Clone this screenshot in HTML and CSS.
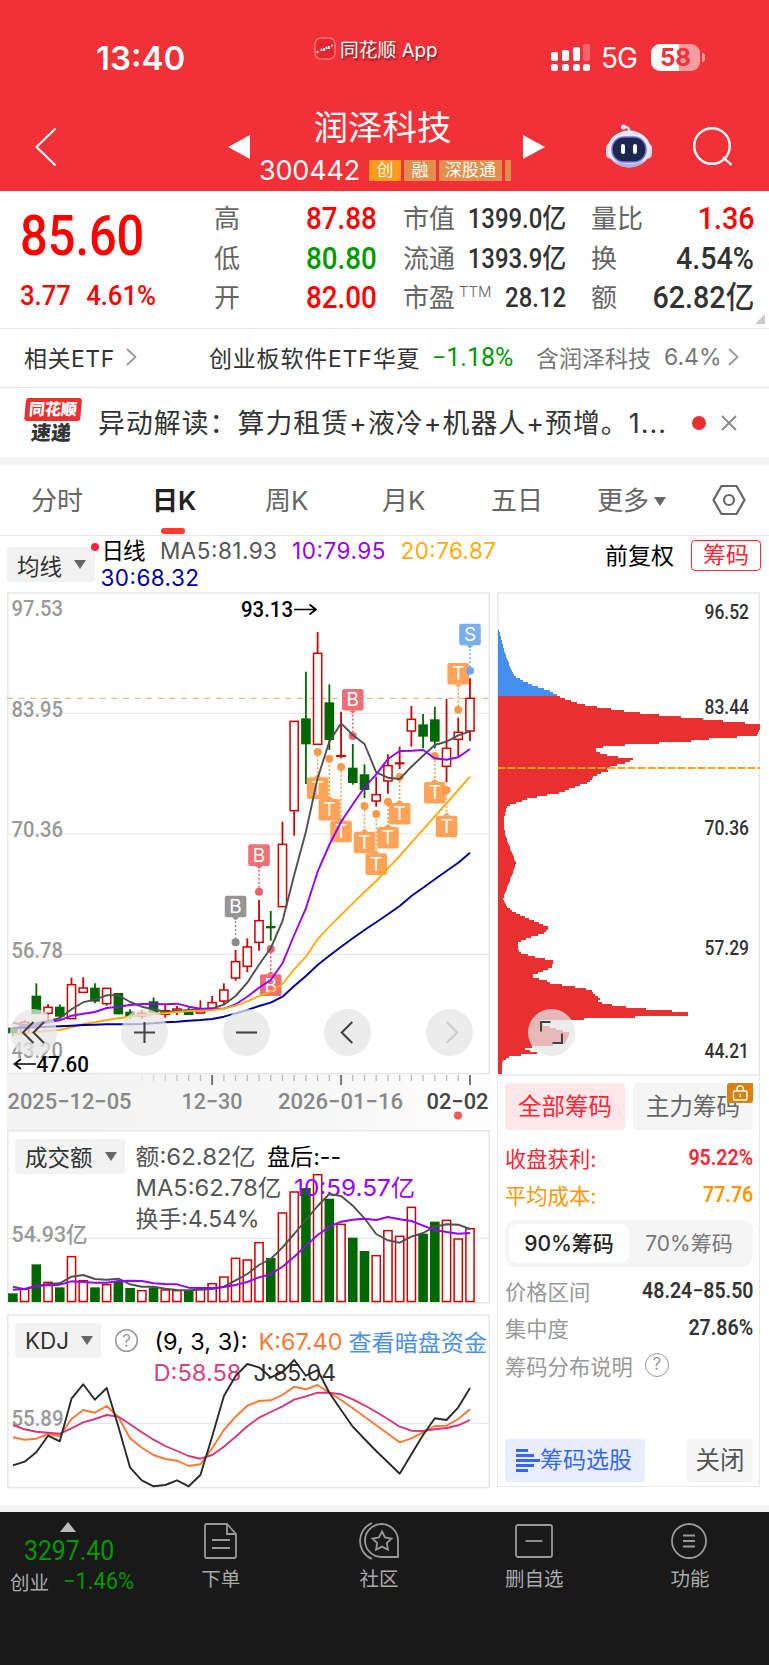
FILE: index.html
```html
<!DOCTYPE html>
<html lang="zh-CN">
<head>
  <meta charset="UTF-8" />
  <meta name="viewport" content="width=device-width, initial-scale=1.0"/>
  <title>润泽科技 300442</title>
  <link rel="stylesheet" href="styles.css">
</head>
<body>

  <header class="header">
    <div class="status">
      <span class="clock">13:40</span>
      <span class="app-name">
        <svg width="22" height="23" viewBox="0 0 22 23"><rect x="1" y="1" width="20" height="21" rx="6" fill="#e8252c" stroke="#f77" stroke-width="1.5"/><path d="M2.500 14.500l2 1M7 14l1-2M10 11v3M12 10l1 2M15 9v3M18 7.500v2" stroke="#fff" stroke-width="2"/></svg>
        <span>同花顺 App</span>
      </span>
      <svg class="signal" width="40" height="28" viewBox="0 0 40 28" fill="#fff">
        <rect x="0" y="8" width="7" height="9" rx="2"/><rect x="11" y="6" width="7" height="11" rx="2"/><rect x="22" y="3" width="7" height="14" rx="2"/><rect x="32" y="0" width="7" height="17" rx="2" opacity=".25"/>
        <rect x="0" y="20" width="7" height="7" rx="2.5"/><rect x="11" y="20" width="7" height="7" rx="2.5"/><rect x="22" y="20" width="7" height="7" rx="2.5"/><rect x="32" y="20" width="7" height="7" rx="2.5"/>
      </svg>
      <span class="net">5G</span>
      <span class="battery">58</span><i class="battery-tip"></i>
    </div>
    <div class="nav">
      <svg class="back" width="22" height="40" viewBox="0 0 22 40"><path d="M20.500 1.500L1.500 20L20.500 38.500" fill="none" stroke="#fff" stroke-width="2.2"/></svg>
      <svg class="prev" width="22" height="24" viewBox="0 0 22 24"><path d="M22 0V24L0 12z" fill="#fff"/></svg>
      <div class="stock">
        <div class="stock-name">润泽科技</div>
        <div class="stock-code">
          <span class="code">300442</span>
          <em class="badge hot">创</em><em class="badge">融</em><em class="badge wide">深股通</em><em class="badge cut"></em>
        </div>
      </div>
      <svg class="next" width="22" height="24" viewBox="0 0 22 24"><path d="M0 0V24L22 12z" fill="#fff"/></svg>
      <svg class="robot" width="48" height="46" viewBox="0 0 48 46">
        <path d="M24 9Q25 4 20 4" fill="none" stroke="#ccd3f5" stroke-width="2.5"/><circle cx="18.500" cy="4" r="2.500" fill="#e9ecff"/>
        <rect x="1" y="20" width="10" height="16" rx="5" fill="#cfd4f2"/><rect x="37" y="20" width="10" height="16" rx="5" fill="#cfd4f2"/>
        <ellipse cx="24" cy="26" rx="21.500" ry="18.500" fill="#e6eafc"/><path d="M8 37Q24 45 40 37Q34 44.500 24 44.500T8 37" fill="#a9b3e8"/>
        <rect x="7" y="14" width="34" height="25" rx="12" fill="#1c2750" stroke="#7b6fe0" stroke-width="1.5"/>
        <rect x="16" y="21" width="4" height="10" rx="2" fill="#fff"/><rect x="28" y="21" width="4" height="10" rx="2" fill="#fff"/>
      </svg>
      <svg class="search" width="42" height="42" viewBox="0 0 42 42" fill="none" stroke="#fff" stroke-width="2.4"><circle cx="20" cy="20" r="17.800"/><path d="M31 31L39.500 39"/></svg>
    </div>
  </header>

  <section class="quote">
    <div class="price">
      <div class="last din">85.60</div>
      <div class="change"><span class="din">3.77</span><span class="din">4.61%</span></div>
    </div>
    <dl class="stats c1">
      <dt>高</dt><dd class="up din">87.88</dd>
      <dt>低</dt><dd class="down din">80.80</dd>
      <dt>开</dt><dd class="up din">82.00</dd>
    </dl>
    <dl class="stats c2">
      <dt>市值</dt><dd class="din">1399.0亿</dd>
      <dt>流通</dt><dd class="din">1393.9亿</dd>
      <dt>市盈<sup>TTM</sup></dt><dd class="din">28.12</dd>
    </dl>
    <dl class="stats c3">
      <dt>量比</dt><dd class="up din">1.36</dd>
      <dt>换</dt><dd class="din">4.54%</dd>
      <dt>额</dt><dd class="din">62.82亿</dd>
    </dl>
    <i class="corner"></i>
  </section>

  <section class="etf">
    <span class="etf-title">相关ETF</span>
    <svg width="11" height="18" viewBox="0 0 11 18"><path d="M1 1l8.500 8L1 17" fill="none" stroke="#999" stroke-width="1.8"/></svg>
    <span class="etf-name">创业板软件ETF华夏</span>
    <span class="etf-pct din">−1.18%</span>
    <span class="etf-hold">含润泽科技</span><span class="etf-weight">6.4%</span>
    <svg width="11" height="18" viewBox="0 0 11 18"><path d="M1 1l8.500 8L1 17" fill="none" stroke="#999" stroke-width="1.8"/></svg>
  </section>

  <section class="news">
    <div class="news-logo"><b>同花顺</b><i>速递</i></div>
    <span class="news-text">异动解读：算力租赁+液冷+机器人+预增。1...</span>
    <i class="news-dot"></i>
    <svg width="16" height="16" viewBox="0 0 16 16"><path d="M1 1l14 14M15 1L1 15" stroke="#888" stroke-width="1.800"/></svg>
  </section>

  <nav class="tabs">
    <span>分时</span>
    <span class="active">日K</span>
    <span>周K</span>
    <span>月K</span>
    <span>五日</span>
    <span>更多<i class="caret"></i></span>
    <svg width="34" height="32" viewBox="0 0 34 32" fill="none" stroke="#666" stroke-width="2.200"><path d="M9.500 2h15L32.500 16l-8 14h-15L1.500 16z" stroke-linejoin="round"/><circle cx="17" cy="16" r="5"/></svg>
  </nav>

  <div class="info">
    <span class="select ma-select">均线<i class="caret"></i></span>
    <i class="ma-dot"></i>
    <svg class="ma-values" width="410" height="56" viewBox="100 536 410 56">
      <g font-size="22.500">
        <text x="102.500" y="559" textLength="44" fill="#000">日线</text>
        <text x="161" y="559" textLength="117" fill="#555">MA5:81.93</text>
        <text x="293" y="559" textLength="93.500" fill="#9400ff">10:79.95</text>
        <text x="401.500" y="559" textLength="95.500" fill="#ffac0a">20:76.87</text>
        <text x="101.500" y="586" textLength="98.500" fill="#00009c">30:68.32</text>
      </g>
    </svg>
    <span class="fq">前复权</span>
    <span class="chip-btn">筹码</span>
  </div>

  <main class="charts">
    <div class="left">
      <svg id="kline" width="483" height="538" viewBox="7 592 483 538"></svg>
      <div class="panel">
        <svg id="volume" width="483" height="174" viewBox="7 1130 483 174"></svg>
        <span class="select">成交额<i class="caret"></i></span>
      </div>
      <div class="panel">
        <svg id="kdj" width="483" height="175" viewBox="7 1314 483 175"></svg>
        <span class="select">KDJ<i class="caret"></i></span>
      </div>
    </div>

    <div class="right">
      <svg id="chips" width="263" height="484" viewBox="497 592 263 484"></svg>
      <div class="chip-info">
        <div class="chip-tabs">
          <span class="on">全部筹码</span>
          <span>主力筹码
            <svg class="lock" width="26" height="20" viewBox="0 0 26 20"><path d="M3 0H26V17a3 3 0 0 1-3 3H0V3a3 3 0 0 1 3-3z" fill="#d9820f"/><rect x="6.500" y="8" width="13.500" height="9" rx="1" fill="none" stroke="#fff" stroke-width="1.300"/><path d="M10 8V6a3.200 3.200 0 0 1 6.400 0V8M13.200 11v3" fill="none" stroke="#fff" stroke-width="1.300"/></svg>
          </span>
        </div>
        <div class="row red"><span>收盘获利:</span><b>95.22%</b></div>
        <div class="row orange"><span>平均成本:</span><b>77.76</b></div>
        <div class="switch"><span class="on">90%筹码</span><span>70%筹码</span></div>
        <div class="row"><span>价格区间</span><b>48.24−85.50</b></div>
        <div class="row"><span>集中度</span><b>27.86%</b></div>
        <div class="row"><span>筹码分布说明</span><i class="help">?</i></div>
        <div class="chip-actions">
          <span class="pick"><svg width="24" height="24" viewBox="0 0 24 24" fill="#3366ff"><path d="M0 0h12v3H0zM0 5h18v3H0zM0 10h24v3H0zM0 15h18v3H0zM0 20h12v3H0z"/></svg>筹码选股</span>
          <span class="close">关闭</span>
        </div>
      </div>
    </div>

    <div class="tools">
      <span><svg viewBox="0 0 24 24"><path d="M12 1L1 12l11 11M23 1L12 12l11 11"/></svg></span>
      <span><svg viewBox="0 0 24 24"><path d="M12 1v22M1 12h22"/></svg></span>
      <span><svg viewBox="0 0 24 24"><path d="M1 12h22"/></svg></span>
      <span><svg viewBox="0 0 24 24"><path d="M17 1L6 12l11 11"/></svg></span>
      <span class="off"><svg viewBox="0 0 24 24"><path d="M9 1l11 11L9 23"/></svg></span>
      <span><svg viewBox="0 0 24 24"><path d="M1 11V1h10M23 13v10H13"/></svg></span>
    </div>
  </main>

  <footer class="tabbar">
    <div class="index">
      <i class="tri"></i>
      <span class="index-value din">3297.40</span>
      <span class="index-sub"><span>创业</span><b class="din">−1.46%</b></span>
    </div>
    <div class="item">
      <svg width="36" height="38" viewBox="0 0 36 38"><path d="M3 2h21l9 10v22a2 2 0 0 1-2 2H3a2 2 0 0 1-1-2V3zM24 2v10h9M9 18h18M9 26h18"/></svg>
      <span>下单</span>
    </div>
    <div class="item i2">
      <svg width="40" height="38" viewBox="0 0 40 38"><path d="M13 1C-3 8-3 30 13 37M39 35H23A16.500 16.500 0 1 1 39 19zM23 9.500l3 6 6.500 1-4.700 4.600 1.100 6.600-5.900-3.100-5.900 3.100 1.100-6.600-4.700-4.600 6.500-1z"/></svg>
      <span>社区</span>
    </div>
    <div class="item i3">
      <svg width="38" height="38" viewBox="0 0 38 38"><rect x="1" y="3" width="36" height="32" rx="2"/><path d="M10.500 19h17"/></svg>
      <span>删自选</span>
    </div>
    <div class="item i4">
      <svg width="38" height="38" viewBox="0 0 38 38"><circle cx="18" cy="19" r="17"/><path d="M12 13.500h12M12 19h12M12 24.500h12"/></svg>
      <span>功能</span>
    </div>
  </footer>

  <script src="app.js"></script>
</body>
</html>
```
FILE: styles.css
```css
* {
  box-sizing: border-box;
}
body {
  margin: 0;
  width: 769px;
  background: #fff;
  color: #333;
  font-family: Inter, "Noto Sans CJK SC", sans-serif;
  overflow-x: hidden;
}
svg {
  display: block;
  flex: none;
}
i, em {
  font-style: normal;
}
text {
  font-family: Inter, "Noto Sans CJK SC", sans-serif;
}
.din, text.din {
  font-family: Roboto, "Noto Sans CJK SC", sans-serif;
  font-weight: 500;
}
.up { color: #f00; }
.down { color: #090; }

/* header */
.header {
  height: 191px;
  background: #f23038;
  color: #fff;
}
.status {
  display: flex;
  align-items: center;
  height: 100px;
  padding: 15px 0 0 96px;
}
.clock {
  width: 218px;
  font-size: 33px;
  font-weight: 600;
}
.app-name {
  display: flex;
  align-items: center;
  width: 237px;
  margin-top: -18px;
  gap: 4px;
  font-size: 18.800px;
  white-space: nowrap;
  text-shadow: 1px 2px 2px rgba(0,0,0,.5);
}
.net {
  margin-left: 10px;
  width: 50px;
  font-size: 28px;
  letter-spacing: -1px;
}
.battery {
  width: 49px;
  height: 27px;
  border-radius: 9px;
  background: linear-gradient(90deg, #fff 58%, #f99ca0 58%);
  color: #f23038;
  font-size: 24px;
  font-weight: 700;
  line-height: 27px;
  text-align: center;
}
.battery-tip {
  width: 3px;
  height: 9px;
  margin-left: 2px;
  border-radius: 0 3px 3px 0;
  background: #f99ca0;
}
.nav {
  display: flex;
  align-items: center;
  height: 91px;
  padding-left: 35px;
}
.back { margin-top: 3px; }
.prev { margin-left: 171px; margin-top: 2px; }
.stock {
  width: 274px;
  padding-left: 9px;
}
.stock-name {
  height: 50px;
  margin-right: 18px;
  font-size: 34.500px;
  line-height: 48px;
  text-align: center;
}
.stock-code {
  display: flex;
  align-items: center;
  height: 34px;
}
.code {
  width: 110px;
  font-size: 27px;
  letter-spacing: -.2px;
}
.badge {
  width: 32px;
  height: 21px;
  margin-right: 3px;
  background: #e38e4a;
  font-size: 17px;
  line-height: 21px;
  text-align: center;
}
.badge.hot { background: #ff9c1b; }
.badge.wide { width: 63px; }
.badge.cut { width: 6px; }
.next { margin-top: 2px; margin-left: -1px; }
.robot { margin-left: 60px; }
.search { margin-left: 39px; margin-top: 2px; }

/* quote */
.quote {
  position: relative;
  display: flex;
  height: 138px;
  border-bottom: 1px solid #e6e6e6;
}
.price {
  width: 214px;
  padding: 9px 0 0 20px;
  color: #f00;
}
.last {
  font-size: 56px;
  line-height: 73px;
  transform: scaleX(.87);
  transform-origin: left;
}
.change {
  display: flex;
  gap: 10px;
  font-size: 28.500px;
  line-height: 46px;
  transform: scaleX(.9);
  transform-origin: left;
}
.change span + span { margin-left: 7px; }
.stats {
  display: grid;
  grid-template-columns: auto minmax(0, 1fr);
  grid-auto-rows: 39.500px;
  align-content: start;
  margin: 8px 0 0;
  line-height: 40px;
}
.stats dt {
  color: #666;
  font-size: 26px;
  white-space: nowrap;
}
.stats dd {
  justify-self: end;
  margin: 0;
  font-size: 30.500px;
  text-align: right;
  white-space: nowrap;
  transform: scaleX(.91);
  transform-origin: right;
}
.stats sup {
  margin-left: 4px;
  font-size: 15px;
  font-weight: 300;
  line-height: 0;
}
.c1 { width: 163px; }
.c2 { width: 163px; margin-left: 26px; }
.c2 dd { font-size: 27.500px; transform: scaleX(.87); }
.c3 { width: 163px; margin-left: 25px; }
.c3 dd { transform: scaleX(.94); }
.corner {
  position: absolute;
  right: 4px;
  bottom: 4px;
  border: solid transparent;
  border-width: 10px 0 0 10px;
  border-bottom: 10px solid #ccc;
  border-top: 0;
}

.etf {
  display: flex;
  align-items: center;
  height: 59px;
  padding: 0 0 2px 24px;
  border-bottom: 1px solid #e6e6e6;
  font-size: 23px;
  white-space: nowrap;
}
.etf-title { width: 102px; letter-spacing: .5px; }
.etf-name { width: 223px; margin-left: 72px; letter-spacing: .8px; }
.etf-pct { width: 104px; color: #090; font-size: 25px; font-weight: 400; }
.etf-hold { width: 128px; color: #777; }
.etf-weight { width: 64px; color: #777; }

.news {
  display: flex;
  align-items: center;
  height: 69px;
  padding-left: 24px;
}
.news-logo {
  width: 56px;
  margin: -2px 18px 0 0;
  text-align: center;
  transform: skewX(-5deg);
}
.news-logo b {
  display: block;
  border-radius: 3px;
  background: #e83030;
  color: #fff;
  font-size: 16px;
  font-weight: 900;
  line-height: 23px;
}
.news-logo i {
  display: block;
  font-size: 20px;
  font-weight: 900;
  line-height: 25px;
}
.news-text {
  width: 594px;
  margin-top: -3px;
  font-size: 26.800px;
  letter-spacing: 1.1px;
  white-space: nowrap;
}
.news-dot {
  width: 14px;
  height: 14px;
  margin-right: 15px;
  border-radius: 50%;
  background: #e83030;
}

/* period tabs */
.tabs {
  display: flex;
  align-items: center;
  height: 79px;
  padding-left: 31px;
  border-top: 8px solid #f4f4f4;
  border-bottom: 1px solid #e6e6e6;
  color: #666;
  font-size: 26px;
}
.tabs span {
  position: relative;
  top: -2px;
  width: 113px;
  white-space: nowrap;
}
.tabs span:first-child { width: 121px; }
.tabs span:nth-child(3) { width: 117px; }
.tabs span:nth-child(4) { width: 109px; }
.tabs span:nth-child(5) { width: 106px; }
.tabs span:nth-child(6) { width: 115px; }
.tabs .active {
  color: #222;
  font-weight: 600;
}
.tabs .active::after {
  content: "";
  position: absolute;
  left: 9px;
  bottom: -17px;
  width: 24px;
  height: 6px;
  border-radius: 3px;
  background: #ff3b30;
}
.caret {
  display: inline-block;
  margin-left: 5px;
  border: 6.500px solid transparent;
  border-top: 9px solid #666;
  border-bottom: 0;
  vertical-align: 4px;
}

/* averages row */
.info {
  display: flex;
  height: 56px;
  padding-left: 7px;
}
.select {
  display: flex;
  align-items: center;
  height: 35px;
  padding: 0 8px 0 10px;
  border-radius: 4px;
  background: #f2f2f2;
  font-size: 22.500px;
  white-space: nowrap;
}
.select .caret { margin-left: 12px; }
.ma-select {
  width: 88px;
  margin-top: 11px;
}
.ma-dot {
  width: 8px;
  height: 8px;
  margin: 7px 0 0 -4px;
  border-radius: 50%;
  background: #ff2436;
}
.fq {
  margin-left: 96px;
  width: 86px;
  color: #000;
  font-size: 23px;
  line-height: 41px;
}
.chip-btn {
  width: 70px;
  height: 31px;
  margin-top: 4px;
  border: 1.500px solid #ff2436;
  border-radius: 4px;
  color: #ff2436;
  font-size: 23px;
  line-height: 28px;
  text-align: center;
}

/* charts */
.charts {
  position: relative;
  display: flex;
  gap: 7px;
  height: 913px;
  padding-left: 7px;
}
.left {
  width: 483px;
}
.panel {
  position: relative;
  margin-bottom: 10px;
}
.panel .select {
  position: absolute;
  left: 8px;
  top: 8.500px;
}
.right {
  width: 263px;
}
.chip-info {
  height: 411px;
  padding: 7px 6px 0 7px;
  border: solid #e8e8e8;
  border-width: 0 1.500px 1.500px;
}
.chip-tabs {
  display: flex;
  gap: 8px;
  margin-bottom: 9px;
}
.chip-tabs span {
  position: relative;
  width: 120px;
  height: 47px;
  border-radius: 4px;
  background: #f5f5f5;
  color: #666;
  font-size: 23.500px;
  line-height: 47px;
  text-align: center;
}
.chip-tabs .on {
  background: #ffe6e8;
  color: #ff2436;
}
.lock {
  position: absolute;
  right: 0;
  top: 0;
}
.row {
  display: flex;
  align-items: center;
  height: 37.500px;
  color: #999;
  font-size: 21.300px;
}
.row b {
  margin-left: auto;
  color: #333;
  font-family: Roboto, sans-serif;
  font-size: 21.500px;
  font-weight: 600;
  transform: scaleX(.91);
  transform-origin: right;
}
.row.red, .row.red b { color: #ff2436; }
.row.orange, .row.orange b { color: #ff9500; }
.row.orange { height: 36px; }
.help {
  width: 24px;
  height: 24px;
  margin-left: 12px;
  border: 1.500px solid #999;
  border-radius: 50%;
  font-size: 17px;
  line-height: 21px;
  text-align: center;
}
.switch {
  display: flex;
  height: 47px;
  margin: 7px 0 5px;
  padding: 4px;
  border-radius: 11px;
  background: #f5f5f5;
  color: #777;
  font-size: 21px;
  line-height: 39px;
  text-align: center;
}
.switch span { flex: 1; white-space: nowrap; }
.switch .on {
  border-radius: 8px;
  background: #fff;
  color: #222;
  font-weight: 500;
}
.chip-actions {
  display: flex;
  justify-content: space-between;
  margin-top: 55px;
  line-height: 43px;
}
.pick {
  display: flex;
  align-items: center;
  width: 140px;
  height: 43px;
  padding-left: 11px;
  border-radius: 4px;
  background: #e8eeff;
  color: #3366ff;
  font-size: 23px;
}
.close {
  width: 66px;
  height: 43px;
  border-radius: 4px;
  background: #f5f5f5;
  color: #555;
  font-size: 24.500px;
  text-align: center;
}
.tools {
  position: absolute;
  left: 10px;
  top: 417px;
  display: flex;
  gap: 54.600px;
}
.tools span {
  width: 47px;
  height: 47px;
  padding: 12px;
  border-radius: 50%;
  background: rgba(230,230,230,.75);
}
.tools span:first-child { margin-right: 9.600px; }
.tools path {
  fill: none;
  stroke: #444;
  stroke-width: 2.200;
}
.tools .off path { stroke: #ccc; }

/* bottom bar */
.tabbar {
  display: flex;
  height: 160px;
  border-top: 7px solid #f4f4f4;
  background: #191919;
  color: #aaa;
  font-size: 19.500px;
}
.index {
  width: 141px;
  padding-top: 10px;
}
.tri {
  display: block;
  width: 0;
  margin-left: 60px;
  border: 8.500px solid transparent;
  border-top: 0;
  border-bottom: 10px solid #bbb;
}
.index-value {
  display: block;
  margin-left: 24px;
  color: #090;
  font-size: 28.500px;
  font-weight: 400;
  line-height: 38px;
  transform: scaleX(.87);
  transform-origin: left;
}
.index-sub {
  display: flex;
  align-items: center;
  height: 22px;
  padding-left: 10px;
}
.index-sub .din {
  margin-left: 14px;
  color: #090;
  font-size: 23.500px;
  font-weight: 400;
  transform: scaleX(.93);
  transform-origin: left;
}
.item {
  display: flex;
  flex-direction: column;
  align-items: center;
  width: 160px;
  padding-top: 10px;
  line-height: 34px;
}
.item span { margin-top: 2px; }
.i2 { width: 157px; }
.i3 { width: 154px; }
.i4 { width: 158px; }
.item svg {
  fill: none;
  stroke: #999;
  stroke-width: 1.800;
}
```
FILE: app.js
```js
const STEP = 11.72;
const X0 = 12.9;
const UP = '#cc0000';
const DOWN = '#006600';

const cx = i => X0 + STEP * i;

// type, body top, body bottom, wick top, wick bottom (thirds of a pixel from the top of the chart)
const candles = [
  ['g',1313,1330,1313,1338],['r',1297,1330,1290,1335],['g',1217,1272,1180,1272],['r',1252,1270,1243,1290],
  ['g',1250,1280,1243,1285],['r',1184,1286,1163,1286],['r',1194,1207,1162,1207],['g',1193,1235,1180,1240],
  ['r',1195,1241,1195,1247],['g',1209,1273,1209,1273],['g',1265,1281,1258,1286],['r',1270,1278,1260,1286],
  ['g',1234,1268,1222,1268],['r',1262,1273,1245,1283],['r',1257,1263,1248,1275],['g',1261,1275,1252,1275],
  ['r',1262,1269,1231,1269],['r',1238,1257,1218,1257],['r',1200,1233,1180,1244],['r',1115,1164,1080,1172],
  ['r',1071,1129,1045,1146],['r',992,1057,930,1082],['g',1008,1015,963,1052],['r',763,950,695,950],
  ['r',394,662,394,737],['g',385,463,245,582],['r',190,463,126,463],['g',337,450,283,480],
  ['r',497,499,365,505],['g',533,579,462,584],['g',553,600,523,624],['r',614,633,560,650],
  ['r',527,573,493,611],['r',519,521,470,537],['r',388,423,348,470],['g',403,440,372,475],
  ['g',388,455,350,475],['r',475,529,327,577],['r',427,448,383,500],['r',325,423,265,453]
];
const ma5 = [1298,1305,1300,1293,1285,1258,1237,1228,1216,1216,1236,1250,1258,1266,1263,1260,1258,1255,1244,1218,1178,1124,1075,993,855,725,565,455,400,435,462,547,563,567,530,497,465,455,436,424];
const ma10 = [1315,1308,1305,1297,1291,1277,1271,1266,1254,1250,1245,1242,1242,1243,1241,1250,1256,1256,1256,1243,1220,1193,1170,1120,1035,955,845,765,695,643,592,553,507,483,482,480,505,509,502,477];
const ma20 = [1333,1331,1326,1322,1320,1312,1302,1297,1290,1285,1280,1275,1273,1270,1266,1263,1262,1261,1256,1247,1234,1218,1205,1182,1138,1100,1048,1010,975,940,906,873,835,798,758,719,679,640,600,560];
const ma30 = [1315,1313,1312,1310,1309,1307,1305,1304,1303,1303,1303,1302,1300,1297,1295,1292,1290,1287,1280,1270,1260,1248,1238,1220,1188,1158,1125,1097,1070,1045,1020,997,973,948,918,893,868,843,818,788];

// index, letter, colour, box top, dot
const marks = [
  [19,'B','#8a8a8a',917,1057],[21,'B','#ed6168',763,905],[22,'B','#ed6168',1153,1077],[29,'B','#ed6168',297,438],
  [38,'T','#ff9a48',219,359],[39,'S','#6ba6ee',101,242],[26,'T','#ff9a48',562,486],[27,'T','#ff9a48',627,506],
  [28,'T','#ff9a48',692,531],[31,'T','#ff9a48',790,672],[30,'T','#ff9a48',725,648],[32,'T','#ff9a48',711,635],
  [33,'T','#ff9a48',639,561],[36,'T','#ff9a48',576,498],[37,'T','#ff9a48',677,600]
];

const vol = [640,627,553,607,622,530,602,622,614,605,624,632,622,630,632,630,627,611,591,535,540,488,534,399,336,324,284,356,433,473,513,527,452,469,382,461,425,421,477,446];
const vol5 = [620,628,618,612,610,590,585,597,599,596,613,620,620,626,630,631,629,627,620,601,582,555,537,502,462,420,378,342,348,377,415,462,481,488,470,459,440,433,434,447];
const vol10 = [629,627,618,616,614,604,606,608,608,603,602,603,610,612,613,623,624,624,621,615,606,592,582,560,530,498,465,440,425,419,416,420,411,418,423,437,450,456,461,459];

const kLine = [412,419,416,402,408,357,330,338,318,352,415,443,465,477,482,498,493,445,390,350,317,303,301,285,260,268,255,278,300,325,350,376,401,427,415,397,378,377,357,328];
const dLine = [375,388,395,398,401,385,367,357,345,350,373,397,419,438,453,468,476,465,440,410,379,353,336,319,299,289,278,278,283,298,316,336,357,380,392,393,388,384,376,360];
const jLine = [496,485,457,407,424,296,253,299,264,380,503,541,559,555,541,559,525,410,288,228,192,202,232,217,180,227,210,278,330,380,417,453,487,521,463,405,355,360,322,264];

// cost distribution: width, position
const chips = [
  [2,122],[6,135],[15,175],[25,205],[35,230],[50,260],[75,273],[105,287],[155,303],[185,321],[220,334],[245,342],[275,348],
  [330,356],[395,366],[490,376],[605,386],[705,396],[784,403],[784,420],[775,436],[680,444],[615,448],[555,456],[410,462],
  [350,468],[290,473],[295,485],[310,492],[340,498],[375,504],[412,508],[390,514],[375,521],[350,526],[325,536],[330,543],
  [305,550],[285,560],[272,577],[245,585],[210,598],[187,608],[135,617],[90,626],[65,635],[35,645],[25,652],[15,695],
  [20,735],[53,820],[35,870],[13,928],[25,950],[45,966],[100,990],[153,1013],[135,1030],[95,1042],[60,1057],[58,1080],
  [70,1090],[115,1102],[165,1112],[160,1133],[135,1142],[105,1155],[105,1163],[145,1172],[155,1180],[185,1184],[230,1191],
  [280,1200],[290,1217],[307,1224],[297,1236],[335,1244],[405,1254],[535,1264],[569,1266],[569,1277],[430,1280],[310,1286],
  [205,1288],[125,1293],[135,1305],[215,1330],[200,1362],[105,1370],[75,1378],[120,1390],[35,1398],[10,1416],[10,1455]
];

function line(data, top, color) {
  const pts = data.map((v, i) => `${cx(i).toFixed(1)},${(top + v / 3).toFixed(1)}`).join(' ');
  return `<polyline points="${pts}" fill="none" stroke="${color}" stroke-width="1.9" stroke-linejoin="round"/>`;
}

function label(x, y, w, size, color, str, cls = '') {
  return `<text class="${cls}" x="${x}" y="${y}" textLength="${w}" lengthAdjust="spacingAndGlyphs" font-size="${size}" fill="${color}">${str}</text>`;
}

function hline(y, x1 = 8, x2 = 489) {
  return `<path d="M${x1} ${y}H${x2}" stroke="#e8e8e8" stroke-width="1.2"/>`;
}

function bar(i, type, top, bottom) {
  if (type === 'g') {
    return `<rect x="${cx(i) - 4.8}" y="${top}" width="9.6" height="${bottom - top}" fill="${DOWN}"/>`;
  }
  return `<rect x="${cx(i) - 4.1}" y="${top}" width="8.2" height="${Math.max(bottom - top, .5)}" fill="#fff" stroke="${UP}" stroke-width="1.5"/>`;
}

function drawKline() {
  const y = v => 590 + v / 3;
  let s = '<defs><linearGradient id="fade"><stop offset="0" stop-color="#f3f3f3"/><stop offset=".6" stop-color="#f6f6f6"/><stop offset="1" stop-color="#fdfdfd"/></linearGradient></defs>';
  s += '<rect x="7" y="1074" width="483" height="56" fill="url(#fade)"/>';
  s += '<rect x="7.75" y="593" width="481.5" height="480.5" fill="#fff" stroke="#e8e8e8" stroke-width="1.5"/>';
  s += hline(713.3) + hline(834) + hline(954.3);
  s += label(11.5, 615.5, 51.5, 22, '#999', '97.53', 'din') + label(11.5, 716.5, 51.5, 22, '#999', '83.95', 'din');
  s += label(11.5, 837, 51.5, 22, '#999', '70.36', 'din') + label(11.5, 957.5, 51.5, 22, '#999', '56.78', 'din');
  s += label(11.5, 1058, 51.5, 22, '#999', '43.20', 'din');
  s += '<path d="M7 698.300H489" stroke="#dfbd8c" stroke-width="1.300" stroke-dasharray="6 5.600"/>';

  candles.forEach(([type, top, bottom, high, low], i) => {
    s += `<path d="M${cx(i)} ${y(high)}V${y(low)}" stroke="${type === 'g' ? DOWN : UP}" stroke-width="1.8"/>`;
    s += bar(i, type, y(top), y(bottom));
  });

  marks.forEach(([i, letter, color, top, dot]) => {
    const x = cx(i), t = y(top), d = y(dot);
    const above = d > t;
    const edge = above ? t + 21.5 : t;
    const tip = above ? 3 : -3;
    s += `<path d="M${x} ${edge}V${d}" stroke="${color}" stroke-width="1.500" stroke-dasharray="2 2"/>`;
    s += `<circle cx="${x}" cy="${d}" r="4" fill="${color}"/>`;
    s += `<g fill="${color}" opacity=".9"><rect x="${x - 10.8}" y="${t}" width="21.6" height="21.6" rx="2"/><path d="M${x - 4} ${edge}h8l-4 ${tip}z"/></g>`;
    s += `<text x="${x}" y="${t + 17.3}" text-anchor="middle" font-size="19" fill="#fff">${letter}</text>`;
  });

  s += line(ma5, 590, '#505050') + line(ma10, 590, '#9400ff') + line(ma20, 590, '#ffac0a') + line(ma30, 590, '#00009c');
  s += label(241, 617.3, 52, 22.500, '#000', '93.13', 'din');
  s += '<path d="M294 609.500H316M309.500 604.500L316 609.500L309.500 614.500" fill="none" stroke="#000" stroke-width="1.700"/>';
  s += label(36.5, 1072, 52.500, 22.500, '#000', '47.60', 'din');
  s += '<path d="M36 1064H14.500M21 1059L14.500 1064L21 1069" fill="none" stroke="#000" stroke-width="1.700"/>';

  for (let i = 11; i < 40; i++) {
    const major = i === 17 || i === 28 || i === 39;
    s += `<path d="M${cx(i)} 1075V${major ? 1085 : 1081}" stroke="${major ? '#777' : '#bbb'}" stroke-width="${major ? 2 : 1.3}" opacity="${i < 15 ? (i - 10) / 5 : 1}"/>`;
  }
  s += label(7.5, 1109.3, 124, 22.500, '#888', '2025−12−05', 'din') + label(181.5, 1109.3, 61, 22.500, '#888', '12−30', 'din');
  s += label(278, 1109.3, 125, 22.500, '#888', '2026−01−16', 'din') + label(426.5, 1109.3, 62, 22.500, '#444', '02−02', 'din');
  s += '<circle cx="458" cy="1115.500" r="4" fill="#f8555b"/>';
  document.getElementById('kline').innerHTML = s;
}

function drawVolume() {
  let s = '<rect x="7.75" y="1130.75" width="481.5" height="172" fill="#fff" stroke="#e8e8e8" stroke-width="1.5"/>';
  s += hline(1238.3) + label(11.5, 1241.5, 76, 22, '#999', '54.93亿', 'din');
  vol.forEach((v, i) => {
    const type = candles[i][0];
    s += bar(i, type, 1080 + v / 3, type === 'g' ? 1302 : 1301.5);
  });
  s += label(135.5, 1164.5, 120, 23, '#555', '额:62.82亿') + label(267, 1164.5, 74, 23, '#000', '盘后:--');
  s += label(135.5, 1196, 146, 23, '#555', 'MA5:62.78亿') + label(294, 1196, 121, 23, '#9400ff', '10:59.57亿');
  s += label(135.5, 1227, 124, 23, '#555', '换手:4.54%');
  s += line(vol5, 1080, '#505050') + line(vol10, 1080, '#9400ff');
  document.getElementById('volume').innerHTML = s;
}

function drawKdj() {
  let s = '<rect x="7.75" y="1315" width="481.5" height="172.500" fill="#fff" stroke="#e8e8e8" stroke-width="1.5"/>';
  s += hline(1423.3) + label(11.5, 1425.7, 52, 22, '#999', '55.89', 'din');
  s += '<circle cx="126.500" cy="1340.500" r="10.800" fill="none" stroke="#999" stroke-width="1.500"/>';
  s += '<text x="126.500" y="1346.800" text-anchor="middle" font-size="17" fill="#999">?</text>';
  s += label(154.5, 1349.5, 93, 23, '#000', '(9, 3, 3):') + label(258.5, 1349.5, 84, 23, '#ff7733', 'K:67.40');
  s += label(348.5, 1350.5, 138.5, 23, '#4a90e8', '查看暗盘资金');
  s += label(153.5, 1380.7, 88, 23, '#d9407f', 'D:58.58') + label(253.5, 1380.7, 82.5, 23, '#333', 'J:85.04');
  s += line(kLine, 1300, '#ff7733') + line(dLine, 1300, '#d9357a') + line(jLine, 1300, '#2a2a2a');
  document.getElementById('kdj').innerHTML = s;
}

function chipWidth(pos) {
  for (let i = 1; i < chips.length; i++) {
    const [w1, p1] = chips[i - 1], [w2, p2] = chips[i];
    if (pos <= p2) return w1 + (w2 - w1) * (pos - p1) / (p2 - p1);
  }
  return 0;
}

function drawChips() {
  let s = '<path d="M497.75 1076V593H759.250V1076M498 1075H759" fill="#fff" stroke="#e8e8e8" stroke-width="1.5"/>';
  // one two-pixel row per price level
  for (let p = 123; p < 1455; p += 6) {
    const color = p < 320 ? '#4590ee' : '#e83030';
    s += `<rect x="498.3" y="${590 + (p - 3) / 3}" width="${(chipWidth(p) / 3).toFixed(1)}" height="2" fill="${color}" shape-rendering="crispEdges"/>`;
  }
  s += '<path d="M497.500 768H760" stroke="#ffa01e" stroke-width="1.800" stroke-dasharray="8 2"/>';
  [[618.5, '96.52'], [713.8, '83.44'], [834.5, '70.36'], [954.8, '57.29'], [1058, '44.21']].forEach(([y, t]) => {
    s += label(704.5, y, 44.5, 19.8, '#333', t, 'din');
  });
  document.getElementById('chips').innerHTML = s;
}

drawKline();
drawVolume();
drawKdj();
drawChips();
```
